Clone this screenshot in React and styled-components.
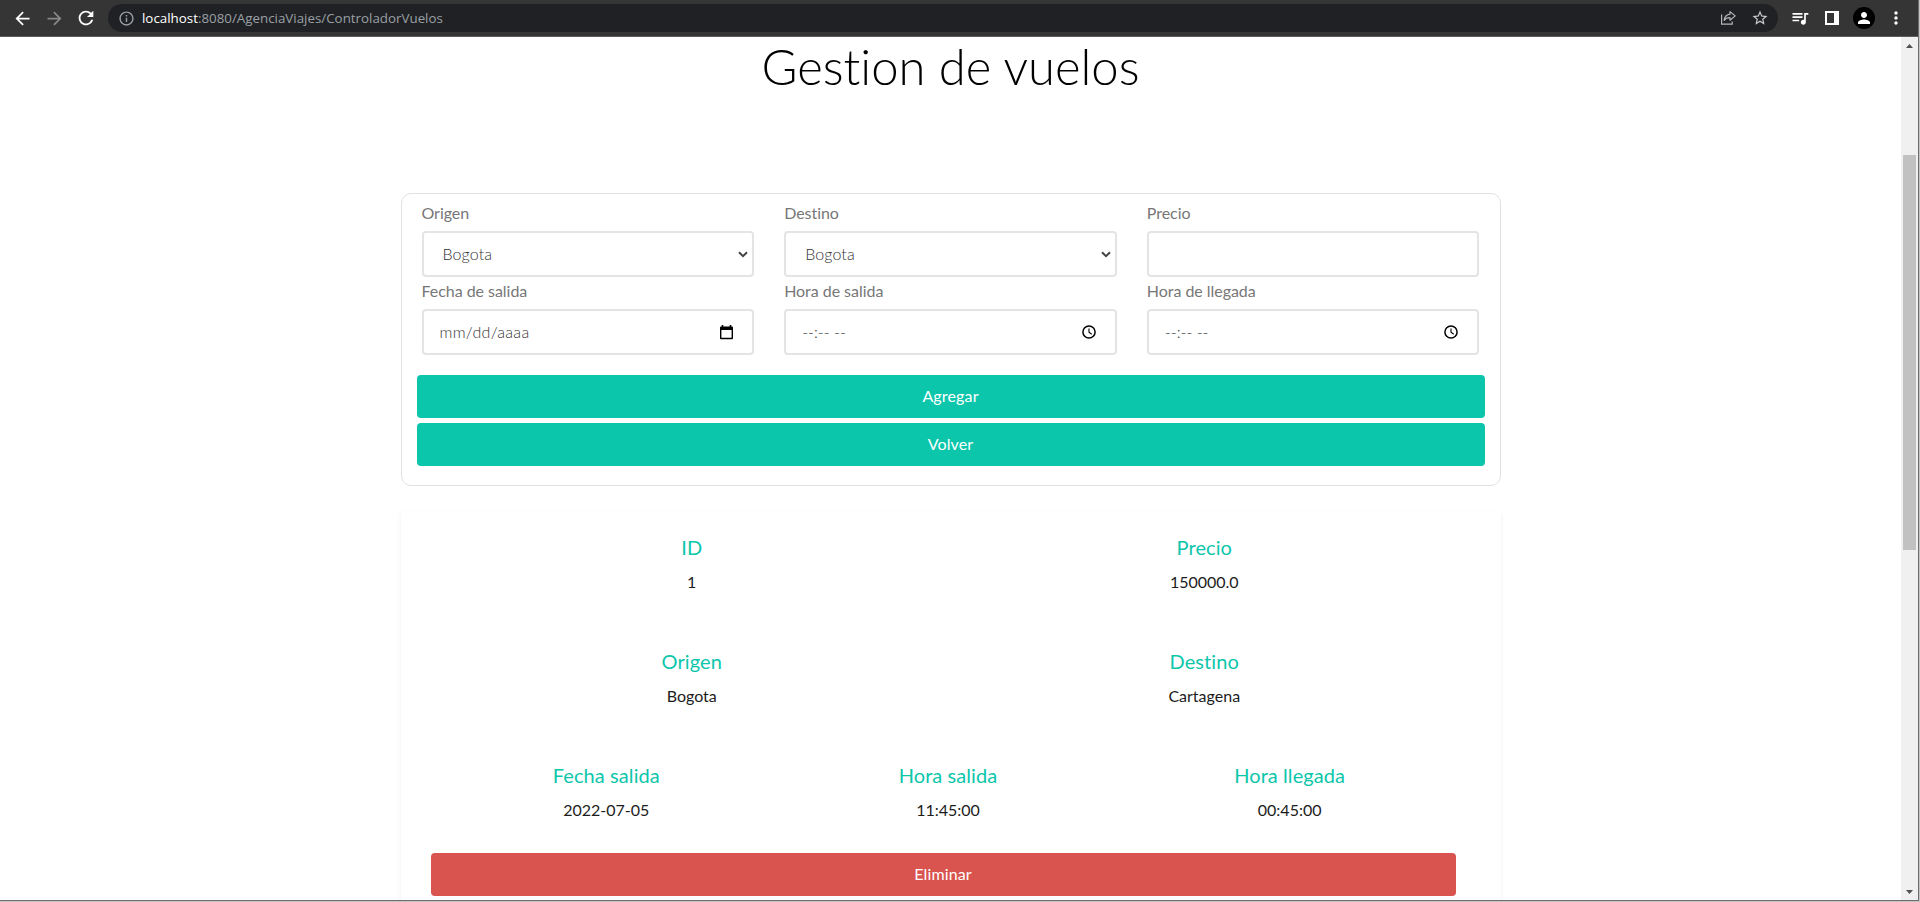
import React from "react";
import styled, { createGlobalStyle } from "styled-components";
import {
  MdArrowBack,
  MdArrowForward,
  MdRefresh,
  MdInfoOutline,
  MdStarBorder,
  MdQueueMusic,
  MdMoreVert,
  MdPerson,
} from "react-icons/md";

const GlobalStyle = createGlobalStyle`
  *, *::before, *::after { box-sizing: border-box; }
  body {
    margin: 0;
    overflow: hidden;
    background: #fff;
    color: #212529;
    font-family: Lato, "Liberation Sans", sans-serif;
    font-size: 16px;
    line-height: 24px;
    font-variant-ligatures: none;
  }
`;

const Window = styled.div`
  width: 1920px;
  height: 902px;
  display: flex;
  flex-direction: column;
  background: #fff;
  border-right: 1px solid #c4c4c4;
  border-bottom: 1px solid #c4c4c4;
`;

const Frame = styled.div`
  flex: 1;
  min-height: 0;
  display: flex;
  flex-direction: column;
  border-right: 1px solid #6e6e6e;
  border-bottom: 1px solid #6e6e6e;
`;

const Toolbar = styled.header`
  flex: none;
  height: 37px;
  display: flex;
  align-items: center;
  gap: 6px;
  padding: 0 6px;
  background: #353535;
  border-bottom: 1px solid #5c5c5c;
`;

const IconGroup = styled.div`
  display: flex;
  align-items: center;
`;

const IconSlot = styled.span`
  width: 32px;
  height: 28px;
  display: flex;
  align-items: center;
  justify-content: center;
  color: ${(p) => p.$color || "#fff"};
  svg { display: block; }
`;

const AddressBar = styled.div`
  flex: 1;
  height: 28px;
  display: flex;
  align-items: center;
  padding: 0 2px;
  border-radius: 14px;
  background: #202124;
`;

const Url = styled.span`
  flex: 1;
  font-family: "Open Sans", "Noto Sans", sans-serif;
  font-size: 13.35px;
  line-height: 28px;
  color: #9aa0a6;
  white-space: nowrap;
`;

const Host = styled.span`
  color: #fff;
`;

const Avatar = styled.span`
  width: 22px;
  height: 22px;
  display: flex;
  align-items: center;
  justify-content: center;
  border-radius: 50%;
  background: #000;
  color: #fff;
`;

const Viewport = styled.div`
  flex: 1;
  min-height: 0;
  display: flex;
`;

const Page = styled.main`
  flex: 1;
  height: 100%;
  display: flex;
  flex-direction: column;
  align-items: center;
  overflow: hidden;
`;

const Title = styled.h1`
  flex: none;
  margin: 0 0 98px;
  font-size: 49px;
  font-weight: 300;
  line-height: 58px;
  color: #000;
  white-space: nowrap;
`;

const FormCard = styled.form`
  flex: none;
  width: 1100px;
  height: 293px;
  padding: 7px 5px 19px;
  border: 1px solid #e1e1e1;
  border-radius: 10px;
`;

const Fields = styled.div`
  display: grid;
  grid-template-columns: repeat(3, 1fr);
`;

const Field = styled.div`
  height: 78px;
  padding: 0 15px;
`;

const Label = styled.div`
  height: 30px;
  letter-spacing: -0.04px;
  color: #777;
`;

const Control = styled.div`
  height: 46px;
  display: flex;
  align-items: center;
  justify-content: space-between;
  padding: ${(p) => (p.$select ? "0 4px 0 19px" : "0 19px 0 16px")};
  border: 2px solid #e4e4e4;
  border-radius: 4px;
  font-weight: 300;
  letter-spacing: ${(p) => p.$tracking || "0"};
  color: #333;
`;

const Button = styled.button`
  display: block;
  width: 100%;
  height: 43px;
  padding: 0 0 2px;
  border: 0;
  border-radius: 4px;
  background: ${(p) => (p.$danger ? "#d9534f" : "#0bc6ab")};
  color: #fff;
  font: inherit;
  letter-spacing: 0.15px;
`;

const Actions = styled.div`
  display: flex;
  flex-direction: column;
  gap: 5px;
  padding: 18px 10px 0;
`;

const FlightCard = styled.section`
  flex: none;
  width: 1100px;
  height: 420px;
  margin-top: 25px;
  padding: 22px 45px 0 30px;
  box-shadow: 0 2px 5px rgba(0, 0, 0, 0.06);
  background: #fff;
`;

const FlightRow = styled.div`
  display: grid;
  grid-template-columns: repeat(${(p) => p.$columns}, 1fr);
  height: 114px;
  margin: 0 -5px 0 5px;
  text-align: center;

  &:last-of-type {
    height: 92px;
  }
`;

const FactName = styled.div`
  font-size: 20px;
  line-height: 28px;
  margin-bottom: 9px;
  letter-spacing: 0.08px;
  color: #0bc6ab;
`;

const FactValue = styled.div`
  color: #1c1c1c;
`;

const ScrollTrack = styled.div`
  flex: none;
  width: 17px;
  display: flex;
  flex-direction: column;
  align-items: center;
  background: #f0f0f0;
`;

const ScrollArrow = styled.div`
  flex: none;
  height: 17px;
  display: flex;
  align-items: center;
`;

const ScrollThumb = styled.div`
  width: 13px;
  height: 395px;
  margin: 101px 0 auto;
  background: #c1c1c1;
`;

const ShareIcon = () => (
  <svg width="17" height="16" viewBox="0 0 17 16" fill="none" stroke="currentColor" strokeWidth="1.2">
    <path d="M1.6 4.5v9.6h10.6v-2.6" />
    <path d="M10 1.6l5.2 4.3L10 10.200V7.700C7.200 7.600 5.600 8.500 4.200 10.400 4.600 7.200 6.300 4.700 10 4.200z" strokeLinejoin="round" />
  </svg>
);

const PanelIcon = () => (
  <svg width="14" height="14" viewBox="0 0 14 14">
    <path fill="currentColor" fillRule="evenodd" d="M0 0h14v14H0zM2 2v10h7V2z" />
  </svg>
);

const ChevronIcon = () => (
  <svg width="10" height="7" viewBox="0 0 10 7" fill="none" stroke="#444" strokeWidth="2">
    <path d="M1 1.200l4 4 4-4" />
  </svg>
);

const CalendarIcon = () => (
  <svg width="13" height="15" viewBox="0 0 13 15">
    <path fill="#000" fillRule="evenodd" d="M1.700 0h1.600v1.400h6.400V0h1.600v1.400h.4c.8 0 1.300.5 1.300 1.300v10.200c0 .8-.5 1.300-1.300 1.300H1.300C.5 14.200 0 13.700 0 12.900V2.700c0-.8.5-1.300 1.300-1.300h.4zM1.400 5v7.800h10.200V5z" />
  </svg>
);

const ClockIcon = () => (
  <svg width="14" height="14" viewBox="0 0 14 14" fill="none" stroke="#000">
    <circle cx="7" cy="7" r="6.1" strokeWidth="1.5" />
    <path d="M7 3.500v3.800l2.700 2" strokeWidth="1.100" />
  </svg>
);

const TriangleIcon = ({ down }) => (
  <svg width="7" height="4" viewBox="0 0 7 4">
    <path fill="#505050" d={down ? "M0 0h7L3.500 4z" : "M0 4h7L3.500 0z"} />
  </svg>
);

const fields = [
  { label: "Origen", value: "Bogota", select: true, tracking: "0.1px", icon: <ChevronIcon /> },
  { label: "Destino", value: "Bogota", select: true, tracking: "0.1px", icon: <ChevronIcon /> },
  { label: "Precio", value: "" },
  { label: "Fecha de salida", value: "mm/dd/aaaa", tracking: "0.3px", icon: <CalendarIcon /> },
  { label: "Hora de salida", value: "--:-- --", icon: <ClockIcon /> },
  { label: "Hora de llegada", value: "--:-- --", icon: <ClockIcon /> },
];

const flight = [
  [["ID", "1"], ["Precio", "150000.0"]],
  [["Origen", "Bogota"], ["Destino", "Cartagena"]],
  [["Fecha salida", "2022-07-05"], ["Hora salida", "11:45:00"], ["Hora llegada", "00:45:00"]],
];

export default function App() {
  return (
    <>
      <GlobalStyle />
      <Window>
        <Frame>
          <Toolbar>
            <IconGroup>
              <IconSlot><MdArrowBack size={21} /></IconSlot>
              <IconSlot $color="#878787"><MdArrowForward size={21} /></IconSlot>
              <IconSlot><MdRefresh size={22} /></IconSlot>
            </IconGroup>
            <AddressBar>
              <IconSlot $color="#9aa0a6"><MdInfoOutline size={17} /></IconSlot>
              <Url><Host>localhost</Host>:8080/AgenciaViajes/ControladorVuelos</Url>
              <IconSlot $color="#b4b6b8"><ShareIcon /></IconSlot>
              <IconSlot $color="#c8c9ca"><MdStarBorder size={18} /></IconSlot>
            </AddressBar>
            <IconGroup>
              <IconSlot><MdQueueMusic size={20} /></IconSlot>
              <IconSlot><PanelIcon /></IconSlot>
              <IconSlot><Avatar><MdPerson size={18} /></Avatar></IconSlot>
              <IconSlot><MdMoreVert size={20} /></IconSlot>
            </IconGroup>
          </Toolbar>
          <Viewport>
            <Page>
              <Title>Gestion de vuelos</Title>
              <FormCard>
                <Fields>
                  {fields.map((f) => (
                    <Field key={f.label}>
                      <Label>{f.label}</Label>
                      <Control $select={f.select} $tracking={f.tracking}>
                        <span>{f.value}</span>
                        {f.icon}
                      </Control>
                    </Field>
                  ))}
                </Fields>
                <Actions>
                  <Button type="button">Agregar</Button>
                  <Button type="button">Volver</Button>
                </Actions>
              </FormCard>
              <FlightCard>
                {flight.map((row) => (
                  <FlightRow key={row[0][0]} $columns={row.length}>
                    {row.map(([name, value]) => (
                      <div key={name}>
                        <FactName>{name}</FactName>
                        <FactValue>{value}</FactValue>
                      </div>
                    ))}
                  </FlightRow>
                ))}
                <Button type="button" $danger>Eliminar</Button>
              </FlightCard>
            </Page>
            <ScrollTrack>
              <ScrollArrow><TriangleIcon /></ScrollArrow>
              <ScrollThumb />
              <ScrollArrow><TriangleIcon down /></ScrollArrow>
            </ScrollTrack>
          </Viewport>
        </Frame>
      </Window>
    </>
  );
}
